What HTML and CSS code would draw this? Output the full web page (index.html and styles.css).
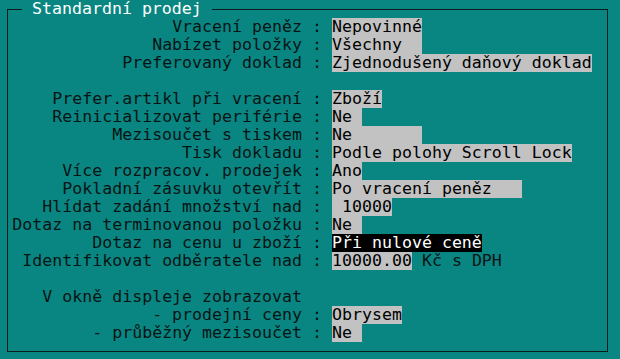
FILE: index.html
```html
<!DOCTYPE html>
<html lang="cs">
<head>
  <meta charset="UTF-8">
  <title>Standardní prodej</title>
  <link rel="stylesheet" href="styles.css">
</head>
<body>
  <div class="screen">
    <div class="frame">
      <div class="title"> Standardní prodej </div>
      <div class="row"><span class="label">Vracení peněz</span><span class="sep"> : </span><span class="val">Nepovinné</span></div>
      <div class="row"><span class="label">Nabízet položky</span><span class="sep"> : </span><span class="val">Všechny  </span></div>
      <div class="row"><span class="label">Preferovaný doklad</span><span class="sep"> : </span><span class="val">Zjednodušený daňový doklad</span></div>
      <div class="row"></div>
      <div class="row"><span class="label">Prefer.artikl při vracení</span><span class="sep"> : </span><span class="val">Zboží</span></div>
      <div class="row"><span class="label">Reinicializovat periférie</span><span class="sep"> : </span><span class="val">Ne </span></div>
      <div class="row"><span class="label">Mezisoučet s tiskem</span><span class="sep"> : </span><span class="val">Ne       </span></div>
      <div class="row"><span class="label">Tisk dokladu</span><span class="sep"> : </span><span class="val">Podle polohy Scroll Lock</span></div>
      <div class="row"><span class="label">Více rozpracov. prodejek</span><span class="sep"> : </span><span class="val">Ano</span></div>
      <div class="row"><span class="label">Pokladní zásuvku otevřít</span><span class="sep"> : </span><span class="val">Po vracení peněz   </span></div>
      <div class="row"><span class="label">Hlídat zadání množství nad</span><span class="sep"> : </span><span class="val"> 10000</span></div>
      <div class="row"><span class="label">Dotaz na terminovanou položku</span><span class="sep"> : </span><span class="val">Ne </span></div>
      <div class="row"><span class="label">Dotaz na cenu u zboží</span><span class="sep"> : </span><span class="val active">Při nulové ceně</span></div>
      <div class="row"><span class="label">Identifikovat odběratele nad</span><span class="sep"> : </span><span class="val">10000.00</span><span class="unit"> Kč s DPH</span></div>
      <div class="row"></div>
      <div class="row"><span class="label">V okně displeje zobrazovat</span></div>
      <div class="row"><span class="label">- prodejní ceny</span><span class="sep"> : </span><span class="val">Obrysem</span></div>
      <div class="row"><span class="label">- průběžný mezisoučet</span><span class="sep"> : </span><span class="val">Ne </span></div>
    </div>
  </div>
</body>
</html>
```

FILE: styles.css
```css
html,body{
  margin: 0;
  padding: 0;
  background: #0a8682;
}
.screen{
  width: 620px;
  height: 359px;
  overflow: hidden;
  padding-top: 9px;
  box-sizing: border-box;
  background: #0a8682;
  font-family: "DejaVu Sans Mono", "Liberation Mono", monospace;
  font-size: 16.6px;
  color: #061414;
}
.frame{
  box-sizing: border-box;
  margin-left: 7px;
  width: 601px;
  height: 343px;
  border: 1px solid #0a1c1c;
}
.title{
  width: max-content;
  height: 18px;
  line-height: 18px;
  margin: -10px 0 0 14px;
  background: #0a8682;
  color: #ffffff;
  white-space: pre;
}
.row{
  display: flex;
  height: 18px;
  line-height: 18px;
  white-space: pre;
}
.label{
  width: 294px;
  text-align: right;
}
.sep{
  width: 30px;
}
.val{
  background: #c2c2c2;
  color: #000000;
}
.val.active{
  background: #000000;
  color: #ffffff;
}
```
